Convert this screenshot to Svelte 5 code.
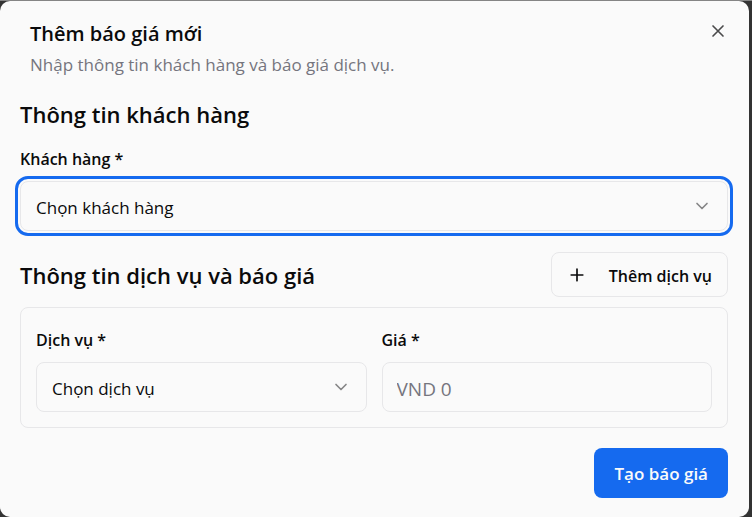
<script>
  let customer = $state('');
  let service = $state('');
  let price = $state('');
</script>

{#snippet chevron()}
  <svg class="chevron" viewBox="0 0 24 24" aria-hidden="true"><path d="m6 9 6 6 6-6" /></svg>
{/snippet}

<div class="overlay">
  <div class="dialog" role="dialog" aria-modal="true" aria-labelledby="title" aria-describedby="description">
    <header>
      <div>
        <h1 id="title">Thêm báo giá mới</h1>
        <p id="description">Nhập thông tin khách hàng và báo giá dịch vụ.</p>
      </div>
      <button class="close" type="button" aria-label="Đóng">
        <svg viewBox="0 0 24 24" aria-hidden="true"><path d="M18 6 6 18M6 6l12 12" /></svg>
      </button>
    </header>

    <form onsubmit={(e) => e.preventDefault()}>
      <h2>Thông tin khách hàng</h2>
      <div class="field customer">
        <label for="customer">Khách hàng *</label>
        <div class="select focused">
          <select id="customer" bind:value={customer}>
            <option value="">Chọn khách hàng</option>
          </select>
          {@render chevron()}
        </div>
      </div>

      <div class="services">
        <h2>Thông tin dịch vụ và báo giá</h2>
        <button class="add" type="button">
          <svg viewBox="0 0 24 24" aria-hidden="true"><path d="M5 12h14M12 5v14" /></svg>
          <span>Thêm dịch vụ</span>
        </button>
      </div>

      <div class="card">
        <div class="field">
          <label for="service">Dịch vụ *</label>
          <div class="select">
            <select id="service" bind:value={service}>
              <option value="">Chọn dịch vụ</option>
            </select>
            {@render chevron()}
          </div>
        </div>
        <div class="field">
          <label for="price">Giá *</label>
          <input id="price" type="text" inputmode="numeric" placeholder="VND 0" bind:value={price} />
        </div>
      </div>

      <footer>
        <button class="submit" type="submit">Tạo báo giá</button>
      </footer>
    </form>
  </div>
</div>

<style>
  :global(body) {
    background: #333;
  }

  .overlay,
  .overlay * {
    box-sizing: border-box;
  }

  .overlay {
    padding: 1px 3px 0 0;
    background: linear-gradient(#858585 1px, #333 1px);
    color: #0a0a0b;
    font-family: 'Segoe UI', 'Open Sans', 'Noto Sans', sans-serif;
    font-size: 17px;
    line-height: 24px;
  }

  .dialog {
    padding: 20px 21px 19px 20px;
    border-radius: 10px;
    background: #fafafa;
  }

  header {
    display: flex;
    justify-content: space-between;
    align-items: flex-start;
    padding-left: 10px;
  }

  h1,
  h2,
  p {
    margin: 0;
  }

  h1 {
    font-size: 20px;
    font-weight: 600;
    line-height: 26px;
  }

  p {
    margin-top: 6px;
    color: #75757e;
  }

  h2 {
    font-size: 22px;
    font-weight: 600;
    line-height: 26px;
  }

  button,
  input,
  select {
    margin: 0;
    border: 1px solid #e7e7e9;
    border-radius: 8px;
    background: #fafafa;
    color: inherit;
    font: inherit;
  }

  svg {
    fill: none;
    stroke: currentColor;
    stroke-width: 2;
    stroke-linecap: round;
    stroke-linejoin: round;
  }

  .close {
    display: flex;
    padding: 0;
    border: 0;
    color: #4a4a4b;
  }

  .close svg {
    width: 20px;
    height: 20px;
  }

  form {
    margin-top: 24px;
  }

  .field {
    display: grid;
    gap: 10px;
  }

  label {
    font-size: 16px;
    font-weight: 600;
  }

  .customer {
    margin-top: 20px;
  }

  .select {
    display: grid;
    align-items: center;
    border-radius: 8px;
  }

  .select > :global(*) {
    grid-area: 1 / 1;
  }

  select,
  input {
    width: 100%;
    height: 50px;
    padding: 3px 15px 0;
  }

  select {
    appearance: none;
    outline: none;
  }

  input {
    padding: 3px 14px 0;
    font-size: 19px;
  }

  input::placeholder {
    color: #75757e;
    opacity: 1;
  }

  .chevron {
    justify-self: end;
    width: 20px;
    height: 20px;
    margin-right: 16px;
    color: #858586;
    pointer-events: none;
  }

  .focused {
    outline: 3px solid #156aef;
    outline-offset: 2px;
  }

  .services {
    display: flex;
    justify-content: space-between;
    align-items: center;
    margin-top: 21px;
  }

  .add {
    display: flex;
    align-items: center;
    gap: 22px;
    height: 45px;
    padding: 0 15px;
    font-size: 16px;
    font-weight: 600;
  }

  .add span {
    padding-top: 2px;
  }

  .add svg {
    width: 20px;
    height: 20px;
  }

  .card {
    display: grid;
    grid-template-columns: 1fr 1fr;
    gap: 15px;
    margin-top: 10px;
    padding: 20px 15px 15px;
    border: 1px solid #e7e7e9;
    border-radius: 8px;
  }

  footer {
    display: flex;
    justify-content: flex-end;
    margin-top: 20px;
  }

  .submit {
    height: 50px;
    padding: 2px 20px 0;
    border: 0;
    background: #156aef;
    color: #fafafa;
    font-weight: 600;
  }
</style>
